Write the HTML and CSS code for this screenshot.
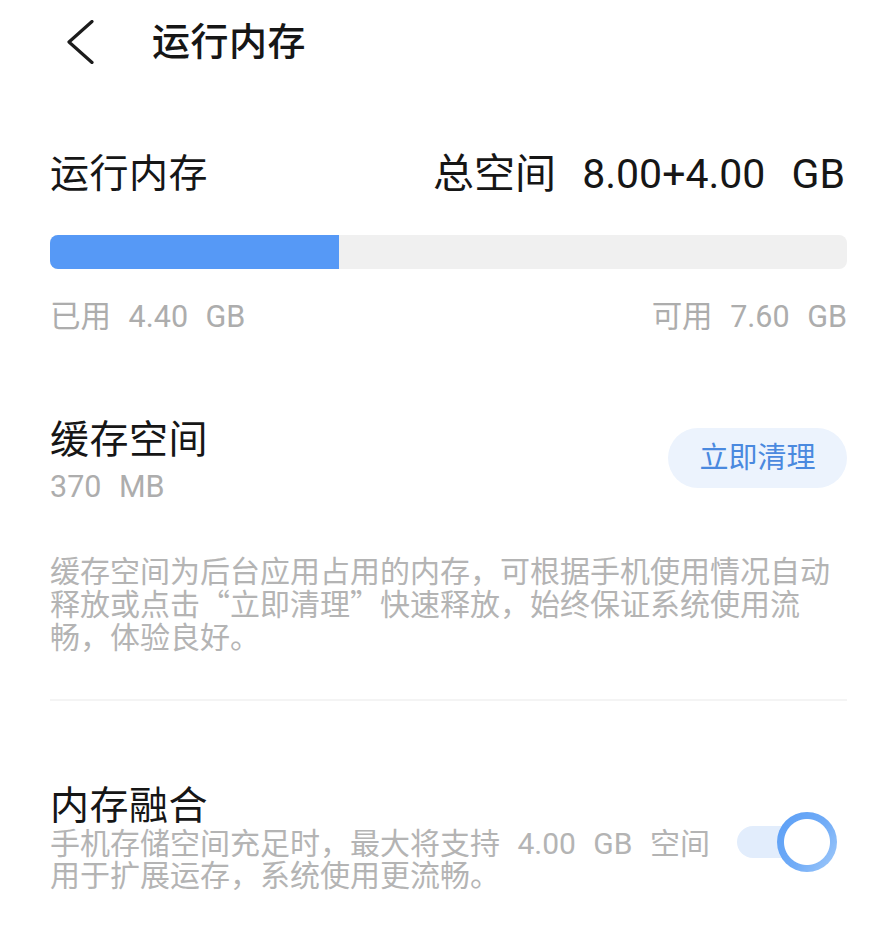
FILE: index.html
```html
<!DOCTYPE html>
<html lang="zh-CN">
<head>
<meta charset="utf-8">
<title>运行内存</title>
<link rel="stylesheet" href="styles.css">
</head>
<body>
<div class="page">
  <header class="header">
    <svg class="back" width="28" height="44" viewBox="0 0 28 44" aria-hidden="true">
      <polyline points="25,1.5 2,22 25,42.5" fill="none" stroke="#1c1c1c" stroke-width="3.2" stroke-linecap="round" stroke-linejoin="round"/>
    </svg>
    <h1 class="title">运行内存</h1>
  </header>

  <section class="memory">
    <div class="summary">
      <span class="summary-label">运行内存</span>
      <span class="summary-total">总空间 8.00+4.00 GB</span>
    </div>
    <div class="bar"><div class="bar-fill" style="width:36.2%"></div></div>
    <div class="usage">
      <span>已用 4.40 GB</span>
      <span>可用 7.60 GB</span>
    </div>
  </section>

  <section class="cache">
    <div class="cache-row">
      <div class="cache-info">
        <div class="item-title">缓存空间</div>
        <div class="cache-size">370 MB</div>
      </div>
      <button class="clean-btn">立即清理</button>
    </div>
    <p class="desc cache-desc">缓存空间为后台应用占用的内存，可根据手机使用情况自动释放或点击“立即清理”快速释放，始终保证系统使用流畅，体验良好。</p>
  </section>

  <div class="divider"></div>

  <section class="fusion">
    <div class="fusion-text">
      <div class="item-title fusion-title">内存融合</div>
      <p class="desc fusion-desc">手机存储空间充足时，最大将支持 4.00 GB 空间用于扩展运存，系统使用更流畅。</p>
    </div>
    <div class="toggle">
      <div class="toggle-track"></div>
      <div class="toggle-knob"></div>
    </div>
  </section>
</div>
</body>
</html>
```

FILE: styles.css
```css
* { box-sizing: border-box; }

html, body {
  margin: 0;
  padding: 0;
  background: #ffffff;
}

body {
  font-family: Roboto, "Noto Sans CJK SC", sans-serif;
  color: #161616;
}

.page {
  width: 895px;
  padding: 0 48px 0 50px;
}

.header {
  display: flex;
  align-items: center;
  height: 83px;
}

.back {
  display: block;
  margin-left: 17px;
  flex: none;
}

.title {
  margin: 0 0 0 57px;
  font-size: 38px;
  font-weight: 500;
  line-height: 1;
  letter-spacing: 0.5px;
}

.summary {
  display: flex;
  justify-content: space-between;
  align-items: center;
  margin-top: 66px;
  height: 50px;
  font-size: 39px;
  line-height: 50px;
}

.summary-label {
  letter-spacing: 0.5px;
}

.summary-total {
  font-size: 41px;
  word-spacing: 16px;
  margin-right: 2px;
}

.bar {
  margin-top: 36px;
  height: 34px;
  border-radius: 8px;
  background: #f0f0f0;
  overflow: hidden;
}

.bar-fill {
  height: 100%;
  background: #5699f6;
}

.usage {
  display: flex;
  justify-content: space-between;
  margin-top: 30px;
  font-size: 30.5px;
  line-height: 36px;
  color: #adadad;
  word-spacing: 10px;
}

.cache {
  margin-top: 81px;
}

.cache-row {
  display: flex;
  justify-content: space-between;
  align-items: flex-start;
}

.item-title {
  font-size: 39px;
  line-height: 48px;
  letter-spacing: 0.5px;
}

.cache-size {
  margin-top: 6px;
  font-size: 30.5px;
  line-height: 34px;
  color: #adadad;
  word-spacing: 10px;
}

.clean-btn {
  margin-top: 12px;
  width: 179px;
  height: 60px;
  border: none;
  border-radius: 30px;
  background: #ecf3fd;
  color: #4a89df;
  font-family: Roboto, "Noto Sans CJK SC", sans-serif;
  font-size: 29px;
  line-height: 60px;
  padding: 0;
}

.desc {
  margin: 0;
  font-size: 30px;
  color: #b4b4b4;
  word-spacing: 10px;
}

.cache-desc {
  margin-top: 49px;
  line-height: 33px;
  font-family: "Noto Sans CJK SC", sans-serif;
}

.divider {
  margin-top: 47px;
  height: 2px;
  background: #f4f4f4;
}

.fusion {
  display: flex;
  align-items: flex-start;
  margin-top: 85px;
}

.fusion-text {
  flex: 1;
  margin-right: 15px;
}

.fusion-title {
  line-height: 44px;
  margin-top: -2px;
}

.fusion-desc {
  line-height: 32px;
}

.toggle {
  position: relative;
  flex: none;
  width: 100px;
  height: 60px;
  margin-top: 26px;
  margin-right: 10px;
}

.toggle-track {
  position: absolute;
  left: 0;
  top: 14px;
  width: 90px;
  height: 32px;
  border-radius: 16px;
  background: #e2edfc;
}

.toggle-knob {
  position: absolute;
  right: 0;
  top: 0;
  width: 60px;
  height: 60px;
  border-radius: 50%;
  background:
    radial-gradient(circle at center, #ffffff 0 22.5px, transparent 23.5px),
    linear-gradient(125deg, #5a9ef6 0%, #71acf7 55%, #a3cbfa 100%);
}
```
